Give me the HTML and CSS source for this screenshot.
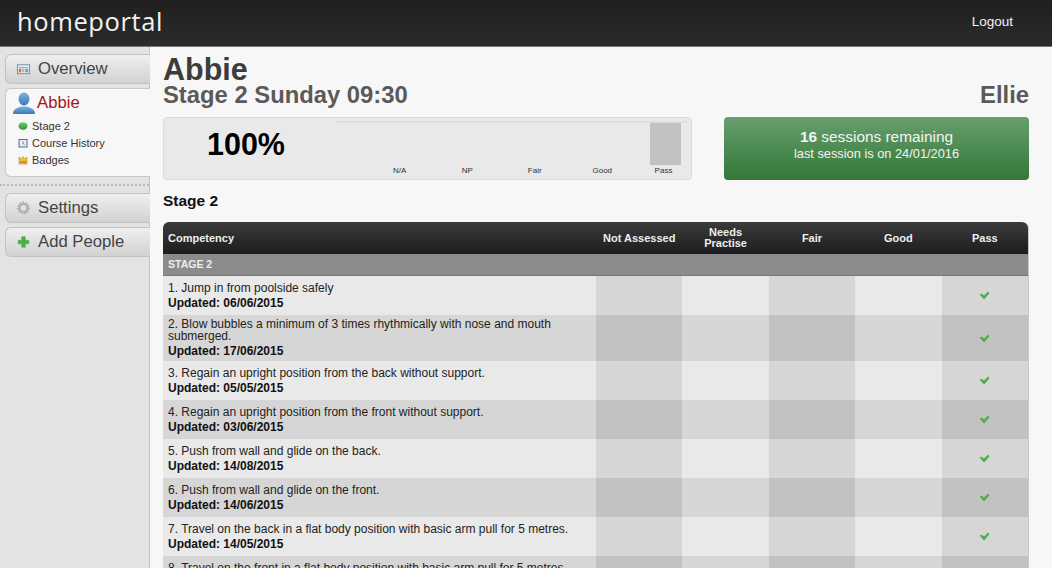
FILE: index.html

```html
<!DOCTYPE html>
<html lang="en">
<head>
    <meta charset="UTF-8">
    <meta name="viewport" content="width=device-width, initial-scale=1.0">
    <title>homeportal</title>
    <link rel="stylesheet" href="styles.css">
</head>
<body>
    <header class="topbar">
        <div class="logo">homeportal</div>
        <a class="logout" href="#">Logout</a>
    </header>
    <div class="page">
        <nav class="sidebar">
            <a class="nav-btn" href="#">
                <svg class="nav-icon" viewBox="0 0 16 14"><rect x="1.500" y="2.500" width="13" height="9.500" fill="#e6edf5" stroke="#6d8db0"/><rect x="3" y="5" width="10" height="1.200" fill="#8aa6c4"/><rect x="3" y="7" width="2.500" height="3.500" fill="#d9654f"/><rect x="6.500" y="7" width="2.500" height="3.500" fill="#e0b84a"/><rect x="10" y="7" width="3" height="3.500" fill="#5fa0d0"/></svg>
                Overview
            </a>
            <div class="person">
                <a class="person-name" href="#">
                    <svg class="user-icon" viewBox="0 0 24 24"><defs><linearGradient id="userBlue" x1="0" y1="0" x2="0" y2="1"><stop offset="0" stop-color="#7fb2e0"/><stop offset="1" stop-color="#3a78b8"/></linearGradient></defs><ellipse cx="12" cy="8" rx="5.500" ry="6.500" fill="url(#userBlue)"/><path d="M1 23c0-5 4-6 8-7.500h6c4 1.500 8 2.500 8 7.500z" fill="url(#userBlue)"/></svg>
                    Abbie
                </a>
                <a class="sub-link" href="#">
                    <svg class="sub-icon" viewBox="0 0 10 10"><defs><linearGradient id="dotGreen" x1="0" y1="0" x2="0" y2="1"><stop offset="0" stop-color="#6fd06f"/><stop offset="1" stop-color="#2f932f"/></linearGradient></defs><ellipse cx="5" cy="5" rx="4.500" ry="3.800" fill="url(#dotGreen)"/></svg>
                    Stage 2
                </a>
                <a class="sub-link" href="#">
                    <svg class="sub-icon" viewBox="0 0 10 10"><rect x="1" y="1.500" width="8" height="7.500" fill="#e8eef5" stroke="#4f6f90"/><path d="M5 3.500v2l1.500 1" fill="none" stroke="#7a5a20" stroke-width=".8"/></svg>
                    Course History
                </a>
                <a class="sub-link" href="#">
                    <svg class="sub-icon" viewBox="0 0 10 10"><path d="M1 2l2 2 2-2.500 2 2.500 2-2v7H1z" fill="#eec33c" stroke="#b98a1c" stroke-width=".6"/><rect x="2" y="6.500" width="6" height="1" fill="#c24f3a"/></svg>
                    Badges
                </a>
            </div>
            <div class="divider"></div>
            <a class="nav-btn" href="#">
                <svg class="nav-icon" viewBox="0 0 16 16"><circle cx="8" cy="8" r="4.500" fill="none" stroke="#aaa" stroke-width="2"/><circle cx="8" cy="8" r="6.400" fill="none" stroke="#aaa" stroke-width="1.800" stroke-dasharray="2 1.500"/></svg>
                Settings
            </a>
            <a class="nav-btn" href="#">
                <svg class="nav-icon" viewBox="0 0 16 16"><path d="M6 2h4v4h4v4h-4v4H6v-4H2V6h4z" fill="#4cae4c" stroke="#3a923a" stroke-width=".5"/></svg>
                Add People
            </a>
        </nav>
        <main class="content">
            <h1 class="child-name">Abbie</h1>
            <div class="class-row">
                <h2>Stage 2 Sunday 09:30</h2>
                <h2>Ellie</h2>
            </div>
            <div class="summary-row">
                <div class="progress-panel">
                    <div class="score">100%</div>
                    <div class="chart">
                        <div class="chart-bars">
                            <div class="chart-bar"></div>
                        </div>
                        <div class="chart-labels">
                            <span>N/A</span>
                            <span>NP</span>
                            <span>Fair</span>
                            <span>Good</span>
                            <span>Pass</span>
                        </div>
                    </div>
                </div>
                <div class="sessions">
                    <div class="sessions-count"><strong>16</strong> sessions remaining</div>
                    <div class="sessions-last">last session is on 24/01/2016</div>
                </div>
            </div>
            <h3 class="section-title">Stage 2</h3>
            <table class="competencies">
                <thead>
                    <tr>
                        <th class="name-col">Competency</th>
                        <th>Not Assessed</th>
                        <th>Needs Practise</th>
                        <th>Fair</th>
                        <th>Good</th>
                        <th>Pass</th>
                    </tr>
                </thead>
                <tbody>
                    <tr class="stage-row"><td colspan="6">STAGE 2</td></tr>
                    <tr>
                        <td class="name-col">1. Jump in from poolside safely<b>Updated: 06/06/2015</b></td>
                        <td></td><td></td><td></td><td></td>
                        <td><svg class="tick" viewBox="0 0 12 10"><path d="M.5 4l2.500-1 2.500 2L10 .5l1.500 2L5.500 9.500z" fill="#4cae4c"/></svg></td>
                    </tr>
                    <tr>
                        <td class="name-col">2. Blow bubbles a minimum of 3 times rhythmically with nose and mouth submerged.<b>Updated: 17/06/2015</b></td>
                        <td></td><td></td><td></td><td></td>
                        <td><svg class="tick" viewBox="0 0 12 10"><path d="M.5 4l2.500-1 2.500 2L10 .5l1.500 2L5.500 9.500z" fill="#4cae4c"/></svg></td>
                    </tr>
                    <tr>
                        <td class="name-col">3. Regain an upright position from the back without support.<b>Updated: 05/05/2015</b></td>
                        <td></td><td></td><td></td><td></td>
                        <td><svg class="tick" viewBox="0 0 12 10"><path d="M.5 4l2.500-1 2.500 2L10 .5l1.500 2L5.500 9.500z" fill="#4cae4c"/></svg></td>
                    </tr>
                    <tr>
                        <td class="name-col">4. Regain an upright position from the front without support.<b>Updated: 03/06/2015</b></td>
                        <td></td><td></td><td></td><td></td>
                        <td><svg class="tick" viewBox="0 0 12 10"><path d="M.5 4l2.500-1 2.500 2L10 .5l1.500 2L5.500 9.500z" fill="#4cae4c"/></svg></td>
                    </tr>
                    <tr>
                        <td class="name-col">5. Push from wall and glide on the back.<b>Updated: 14/08/2015</b></td>
                        <td></td><td></td><td></td><td></td>
                        <td><svg class="tick" viewBox="0 0 12 10"><path d="M.5 4l2.500-1 2.500 2L10 .5l1.500 2L5.500 9.500z" fill="#4cae4c"/></svg></td>
                    </tr>
                    <tr>
                        <td class="name-col">6. Push from wall and glide on the front.<b>Updated: 14/06/2015</b></td>
                        <td></td><td></td><td></td><td></td>
                        <td><svg class="tick" viewBox="0 0 12 10"><path d="M.5 4l2.500-1 2.500 2L10 .5l1.500 2L5.500 9.500z" fill="#4cae4c"/></svg></td>
                    </tr>
                    <tr>
                        <td class="name-col">7. Travel on the back in a flat body position with basic arm pull for 5 metres.<b>Updated: 14/05/2015</b></td>
                        <td></td><td></td><td></td><td></td>
                        <td><svg class="tick" viewBox="0 0 12 10"><path d="M.5 4l2.500-1 2.500 2L10 .5l1.500 2L5.500 9.500z" fill="#4cae4c"/></svg></td>
                    </tr>
                    <tr>
                        <td class="name-col">8. Travel on the front in a flat body position with basic arm pull for 5 metres.<b>Updated: 14/05/2015</b></td>
                        <td></td><td></td><td></td><td></td>
                        <td><svg class="tick" viewBox="0 0 12 10"><path d="M.5 4l2.500-1 2.500 2L10 .5l1.500 2L5.500 9.500z" fill="#4cae4c"/></svg></td>
                    </tr>
                </tbody>
            </table>
        </main>
    </div>
</body>
</html>
```

FILE: styles.css

```css
* {
    box-sizing: border-box;
}
html, body {
    height: 100%;
    margin: 0;
    overflow: hidden;
}
body {
    display: flex;
    flex-direction: column;
    font-family: "Liberation Sans", Arial, sans-serif;
    background-color: #f7f7f7;
    color: #222;
}
a {
    text-decoration: none;
    color: inherit;
}
.topbar {
    flex: none;
    display: flex;
    justify-content: space-between;
    align-items: center;
    height: 47px;
    padding: 0 39px 4px 17px;
    background: linear-gradient(#1f1f1f, #2b2b2b);
    border-bottom: 1px solid #777;
}
.logo {
    font-family: "Open Sans", sans-serif;
    font-weight: 400;
    font-size: 25.500px;
    letter-spacing: 0.6px;
    color: #f2f2f2;
}
.logout {
    font-size: 13.500px;
    color: #f2f2f2;
}
.page {
    flex: 1;
    display: flex;
    min-height: 0;
    overflow: hidden;
}
.sidebar {
    flex: none;
    width: 150px;
    padding: 7px 0 0 5px;
    background-color: #e3e3e3;
    border-right: 1px solid #c4c4c4;
}
.nav-btn {
    display: flex;
    align-items: center;
    gap: 7px;
    height: 30px;
    margin-bottom: 4px;
    padding-left: 10px;
    margin-right: -1px;
    font-size: 16.700px;
    color: #444;
    background: linear-gradient(#efefef, #d2d2d2);
    border: 1px solid #c2c2c2;
    border-right: none;
    border-radius: 6px 0 0 6px;
}
.nav-icon {
    width: 15px;
    height: 14px;
}
.person {
    height: 89px;
    margin-right: -1px;
    padding: 2px 0 0 6px;
    background-color: #f7f7f7;
    border: 1px solid #c8c8c8;
    border-right: none;
    border-radius: 6px 0 0 6px;
}
.person-name {
    display: flex;
    align-items: center;
    gap: 1px;
    height: 24px;
    margin-bottom: 2px;
    font-size: 16.700px;
    color: #a5121c;
}
.user-icon {
    width: 24px;
    height: 24px;
}
.sub-link {
    display: flex;
    align-items: center;
    gap: 4px;
    height: 17px;
    padding-left: 6px;
    font-size: 11px;
    color: #333;
}
.sub-icon {
    width: 10px;
    height: 10px;
}
.divider {
    height: 0;
    margin: 7px 0 7px -5px;
    border-top: 2px dotted #bbb;
}
.content {
    flex: 1;
    min-width: 0;
    padding: 8px 23px 0 13px;
}
.child-name {
    margin: 0;
    font-size: 30.500px;
    line-height: 28px;
    color: #3c3c3c;
}
.class-row {
    display: flex;
    justify-content: space-between;
}
.class-row h2 {
    margin: 0;
    font-size: 23.800px;
    line-height: 24px;
    color: #5a5a5a;
}
.summary-row {
    display: flex;
    justify-content: space-between;
    margin-top: 10px;
}
.progress-panel {
    display: flex;
    width: 529px;
    height: 63px;
    background-color: #e9e9e9;
    border: 1px solid #dcdcdc;
    border-radius: 4px;
}
.score {
    width: 172px;
    padding: 9px 8px 0 0;
    text-align: center;
    font-size: 30.500px;
    line-height: 34px;
    font-weight: bold;
    color: #000;
}
.chart {
    flex: 1;
    padding-top: 3px;
}
.chart-bars {
    display: flex;
    justify-content: flex-end;
    height: 44px;
    margin-right: 4px;
    border-top: 2px solid #dedede;
}
.chart-bar {
    width: 31px;
    margin-right: 6px;
    background-color: #c2c2c2;
}
.chart-labels {
    display: grid;
    grid-template-columns: repeat(4, 67.500px) 1fr;
    margin-top: 1px;
    padding-left: 30px;
    font-size: 8px;
    line-height: 10px;
    text-align: center;
    color: #333;
}
.sessions {
    width: 305px;
    height: 63px;
    padding-top: 11px;
    text-align: center;
    color: #f4f4f4;
    background: linear-gradient(#689e6e, #327838);
    border-radius: 4px;
}
.sessions-count {
    font-size: 15.400px;
    line-height: 18px;
}
.sessions-last {
    font-size: 12.800px;
    line-height: 15px;
}
.section-title {
    margin: 13px 0 13px;
    font-size: 15.500px;
    line-height: 16px;
    color: #111;
}
.competencies {
    width: 866px;
    table-layout: fixed;
    border-collapse: separate;
    border-spacing: 0;
    border-right: 1px solid #c8c8c8;
    border-radius: 6px 6px 0 0;
}
.competencies th {
    height: 32px;
    padding: 0 6px;
    font-size: 11px;
    line-height: 11px;
    text-align: center;
    color: #eee;
    background: linear-gradient(#3b3b3b, #1d1d1d);
}
.competencies th:first-child {
    border-top-left-radius: 6px;
}
.competencies th:last-child {
    border-top-right-radius: 6px;
}
.competencies th.name-col {
    width: 433px;
    padding: 0 5px;
    text-align: left;
}
.competencies td {
    height: 39px;
    padding: 3px 5px;
    font-size: 12px;
    line-height: 12px;
    text-align: center;
    background-color: #e9e9e9;
}
.competencies td.name-col {
    text-align: left;
    color: #222;
}
.competencies td b {
    display: block;
    margin-top: 3px;
    line-height: 13px;
    color: #111;
}
.competencies td:nth-child(even) {
    background-color: #d6d6d6;
}
.competencies tr:nth-child(odd) td {
    background-color: #d6d6d6;
}
.competencies tr:nth-child(odd) td:nth-child(even) {
    background-color: #c2c2c2;
}
.competencies tr.stage-row td {
    height: 22px;
    padding: 0 5px 2px;
    font-size: 10.500px;
    font-weight: bold;
    text-align: left;
    color: #eee;
    background-color: #8b8b8b;
    border-bottom: 1px solid #777;
}
.tick {
    display: block;
    width: 11px;
    height: 9px;
    margin: 0 auto;
}
```
